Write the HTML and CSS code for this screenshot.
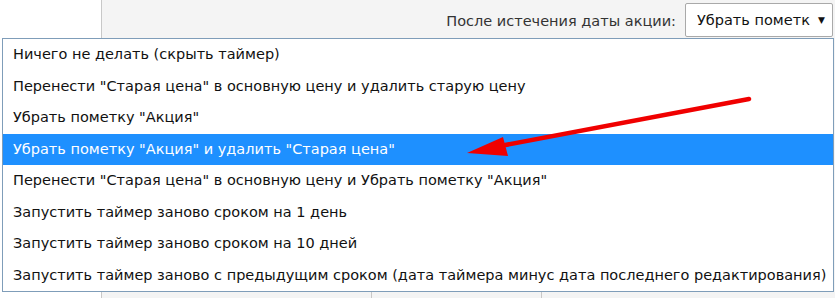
FILE: index.html
```html
<!DOCTYPE html>
<html lang="ru">
<head>
    <meta charset="UTF-8">
    <title>Таймер акции</title>
    <link rel="stylesheet" href="styles.css">
</head>
<body>
    <div class="page">
        <div class="side"></div>
        <div class="content">
            <div class="toolbar">
                <label for="after">После истечения даты акции:</label>
                <div class="select" id="after">
                    <span class="select-value">Убрать пометку "Акция"</span>
                    <span class="select-arrow">&#9660;</span>
                </div>
            </div>
            <div class="table">
                <div class="cell cell-wide"></div>
                <div class="cell cell-mid"></div>
                <div class="cell"></div>
            </div>
        </div>

        <ul class="options">
            <li>Ничего не делать (скрыть таймер)</li>
            <li>Перенести "Старая цена" в основную цену и удалить старую цену</li>
            <li>Убрать пометку "Акция"</li>
            <li class="selected">Убрать пометку "Акция" и удалить "Старая цена"</li>
            <li>Перенести "Старая цена" в основную цену и Убрать пометку "Акция"</li>
            <li>Запустить таймер заново сроком на 1 день</li>
            <li>Запустить таймер заново сроком на 10 дней</li>
            <li>Запустить таймер заново с предыдущим сроком (дата таймера минус дата последнего редактирования)</li>
        </ul>

        <svg class="pointer" width="835" height="298" viewBox="0 0 835 298">
            <line x1="749" y1="99" x2="500" y2="146" stroke="#f00000" stroke-width="4.5" stroke-linecap="round"/>
            <polygon points="467,153 503,137 508,156" fill="#f00000"/>
        </svg>
    </div>
</body>
</html>
```

FILE: styles.css
```css
* {
    box-sizing: border-box;
}

body {
    margin: 0;
    font-family: "DejaVu Sans", Verdana, sans-serif;
    font-size: 14.5px;
    color: #222;
    background: #fff;
}

.page {
    position: relative;
    display: flex;
    width: 835px;
    height: 298px;
    overflow: hidden;
}

.side {
    width: 101px;
    flex-shrink: 0;
    background: #fff;
}

.content {
    flex: 1;
    display: flex;
    flex-direction: column;
    border-left: 1px solid #c8c8c8;
    background: #f4f4f4;
}

.toolbar {
    display: flex;
    justify-content: flex-end;
    align-items: flex-start;
    gap: 9px;
    padding: 3px 2px 0 0;
    height: 38px;
}

.toolbar label {
    padding-top: 10px;
    color: #333;
}

.select {
    display: flex;
    align-items: center;
    width: 148px;
    height: 34px;
    padding: 0 7px 0 11px;
    background: #fff;
    border: 1px solid #a9a9a9;
    border-radius: 2px;
}

.select-value {
    flex: 1;
    min-width: 0;
    margin-right: 8px;
    white-space: nowrap;
    overflow: hidden;
    color: #111;
}

.select-arrow {
    font-size: 9px;
    color: #111;
}

.table {
    flex: 1;
    display: flex;
    margin-top: auto;
}

.cell {
    flex: 1;
    border-left: 1px solid #c8c8c8;
}

.cell-wide {
    flex: 0 0 269px;
    border-left: 0;
}

.cell-mid {
    flex: 0 0 170px;
}

.options {
    position: absolute;
    left: 2px;
    top: 38px;
    width: 832px;
    margin: 0;
    padding: 0;
    list-style: none;
    background: #fff;
    border: 1px solid #7f9db9;
}

.options li {
    height: 31.5px;
    line-height: 30px;
    padding-left: 10px;
    white-space: nowrap;
    color: #111;
}

.options li.selected {
    background: #1e90ff;
    color: #fff;
}

.pointer {
    position: absolute;
    left: 0;
    top: 0;
}
```
